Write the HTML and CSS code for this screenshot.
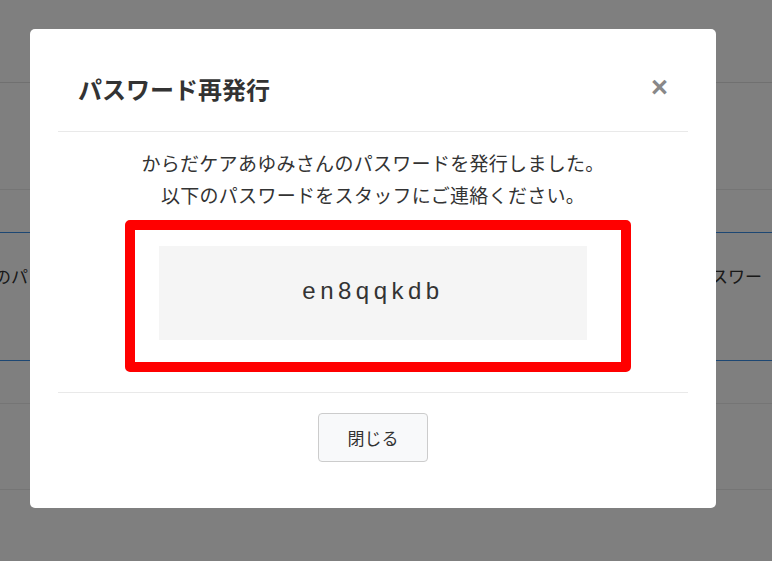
FILE: index.html
```html
<!DOCTYPE html>
<html lang="ja">

<head>
    <meta charset="UTF-8">
    <meta name="viewport" content="width=device-width, initial-scale=1.0">
    <title>パスワード再発行</title>
    <link rel="stylesheet" href="styles.css">
</head>

<body>
    <div class="page">
        <div class="row row-top"></div>
        <div class="row row-head"></div>
        <div class="row row-sub"></div>
        <div class="row row-staff">
            <div class="cell-left"><span>スタッフのパ</span></div>
            <div class="cell-right">パスワー</div>
        </div>
        <div class="row row-a"></div>
        <div class="row row-b"></div>
    </div>

    <div class="overlay">
        <div class="modal">
            <div class="modal-header">
                <h2 class="modal-title">パスワード再発行</h2>
                <span class="close">&times;</span>
            </div>
            <div class="modal-body">
                <p class="message">からだケアあゆみさんのパスワードを発行しました。<br>以下のパスワードをスタッフにご連絡ください。</p>
                <div class="highlight">
                    <div class="password">en8qqkdb</div>
                </div>
            </div>
            <div class="modal-footer">
                <button class="btn-close">閉じる</button>
            </div>
        </div>
    </div>
</body>

</html>
```

FILE: styles.css
```css
body {
    margin: 0;
    font-family: 'Noto Sans CJK JP', 'Noto Sans', sans-serif;
    color: #333;
    background: #fff;
    overflow: hidden;
}

/* page behind the dialog */
.page {
    height: 561px;
}

.row {
    border-bottom: 1px solid #ebebeb;
}

.row-top {
    height: 82px;
    border-bottom-color: #e0e0e0;
}

.row-head {
    height: 106px;
}

.row-sub {
    height: 42px;
    border-bottom: 1px solid #3a8ee6;
}

.row-staff {
    height: 127px;
    border-bottom: 1px solid #3a8ee6;
    display: flex;
    align-items: flex-start;
    font-size: 17px;
    line-height: 24px;
}

.cell-left {
    flex: none;
    width: 28px;
    overflow: hidden;
    display: flex;
    justify-content: flex-end;
    white-space: nowrap;
    margin-top: 31px;
}

.cell-left span {
    flex: none;
}

.cell-right {
    flex: none;
    margin-left: 666px;
    margin-top: 31px;
    white-space: nowrap;
}

.row-a {
    height: 42px;
}

.row-b {
    height: 85px;
}

/* dialog */
.overlay {
    position: fixed;
    top: 0;
    left: 0;
    right: 0;
    bottom: 0;
    background: rgba(0, 0, 0, 0.5);
    padding: 29px 0 0 30px;
}

.modal {
    width: 686px;
    background: #fff;
    border-radius: 5px;
}

.modal-header {
    margin: 0 28px;
    padding: 42px 20px 24px;
    border-bottom: 1px solid #e9e9e9;
    display: flex;
    justify-content: space-between;
    align-items: center;
}

.modal-title {
    margin: 0;
    font-size: 24px;
    line-height: 36px;
    font-weight: bold;
    color: #333;
}

.close {
    font-family: 'Liberation Sans', sans-serif;
    font-size: 29px;
    font-weight: bold;
    color: #888;
    line-height: 36px;
    margin-top: -4px;
    cursor: pointer;
}

.modal-body {
    padding-top: 15px;
}

.message {
    margin: 0;
    text-align: center;
    font-size: 19px;
    letter-spacing: 0.3px;
    line-height: 32px;
    color: #333;
}

.highlight {
    margin: 9px 0 0 95px;
    width: 428px;
    border: 10px solid #ff0000;
    border-radius: 5px;
    padding: 16px 34px 22px 24px;
}

.password {
    background: #f5f5f5;
    height: 94px;
    line-height: 90px;
    text-align: center;
    font-family: 'Liberation Sans', sans-serif;
    font-size: 24px;
    letter-spacing: 4.5px;
    color: #333;
}

.modal-footer {
    margin: 20px 28px 0;
    padding: 20px 0 46px;
    border-top: 1px solid #e9e9e9;
    text-align: center;
}

.btn-close {
    width: 110px;
    height: 49px;
    background: #f8f9fa;
    border: 1px solid #ccc;
    border-radius: 4px;
    font-family: 'Noto Sans CJK JP', sans-serif;
    font-size: 17px;
    color: #333;
    cursor: pointer;
}
```
